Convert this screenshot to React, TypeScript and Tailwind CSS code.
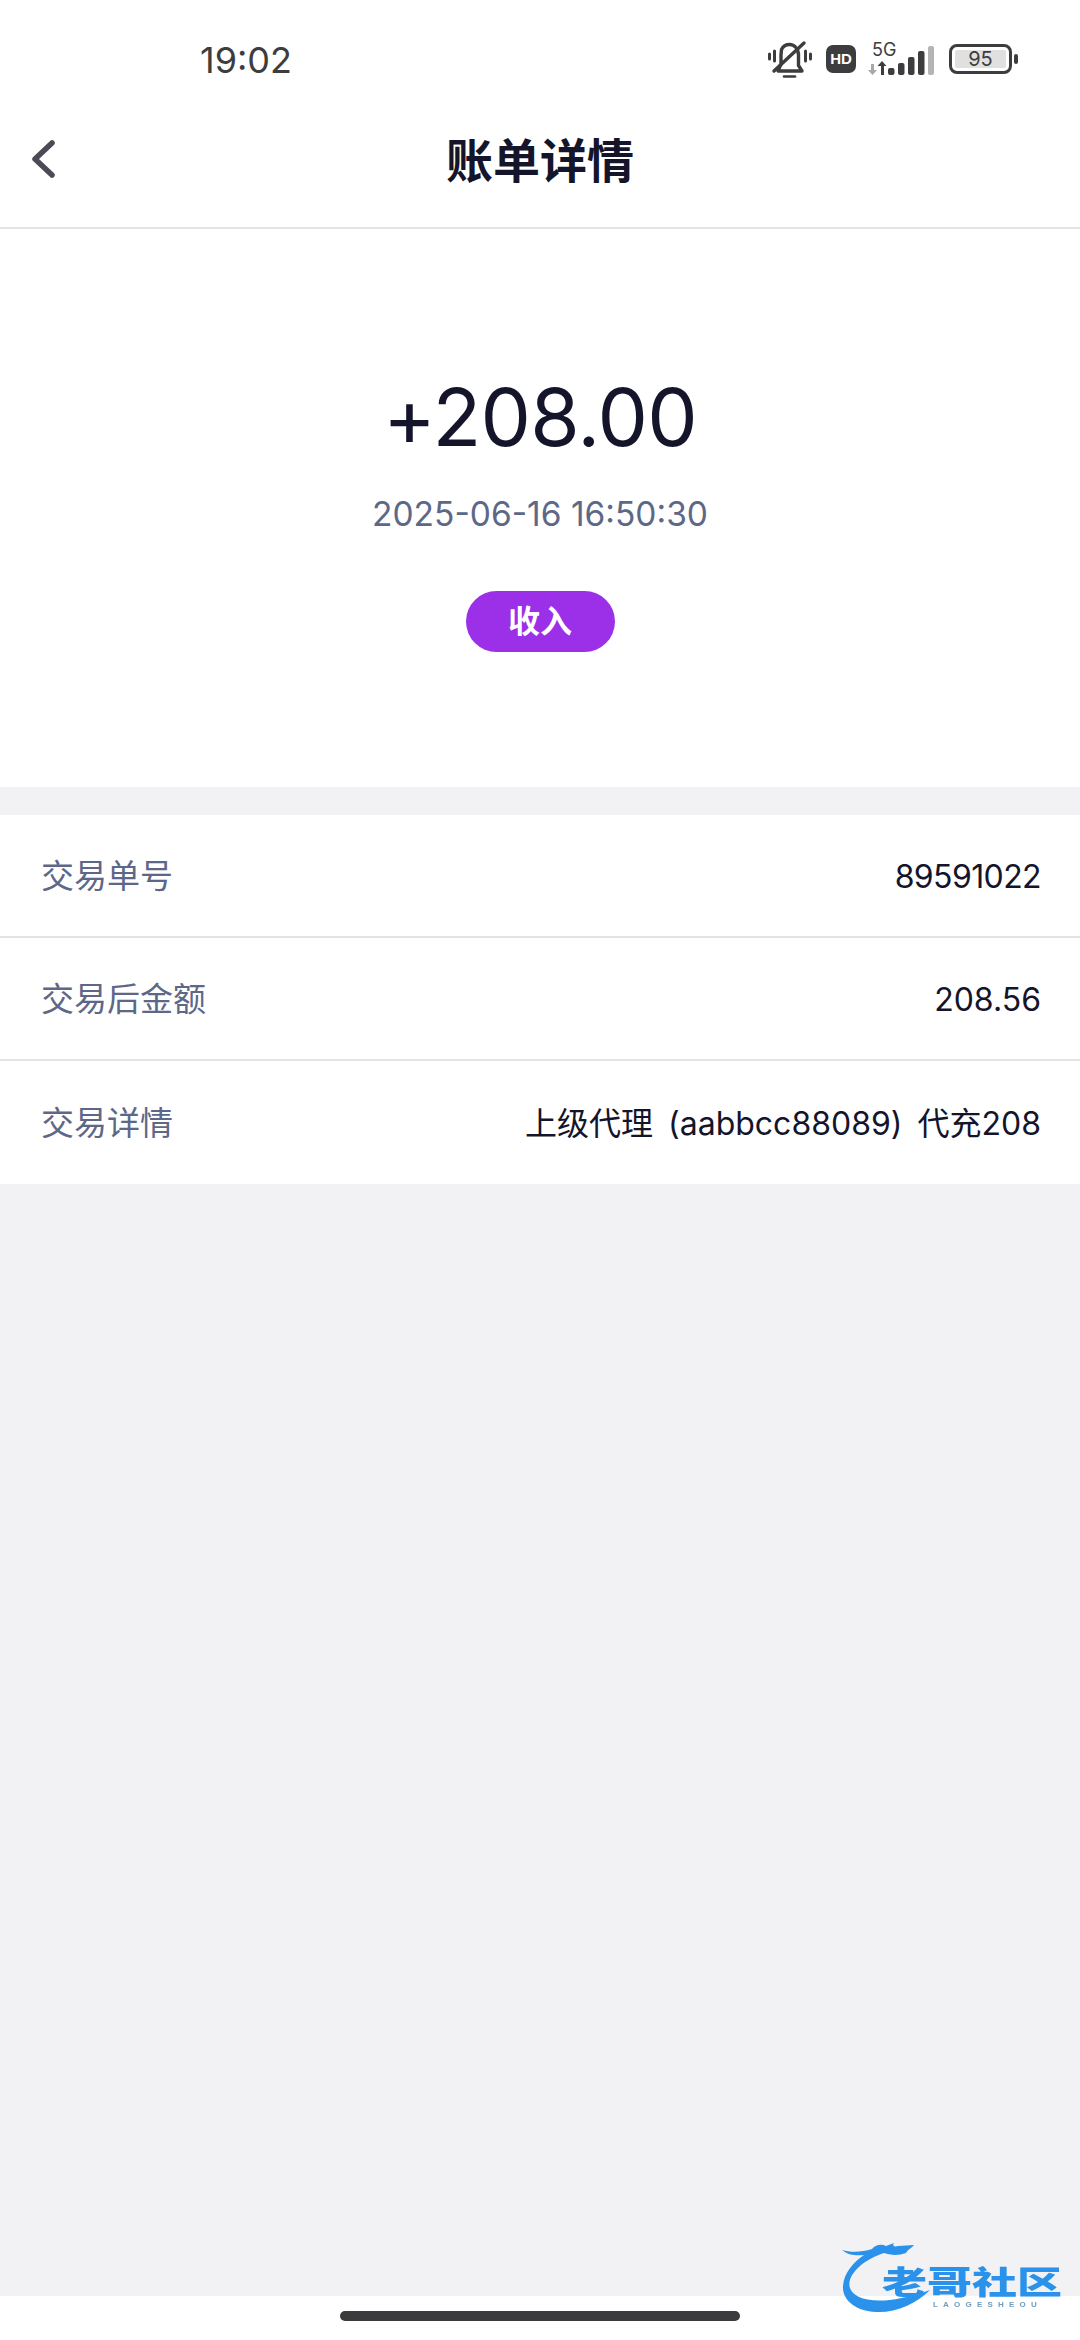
import React from "react";

const CJK = '[font-family:Inter,"Noto_Sans_CJK_SC",sans-serif]';

function MuteBell() {
  return (
    <svg width="44" height="38" viewBox="0 0 44 38" fill="none" stroke="#3d3d3f" strokeWidth="3.4" strokeLinecap="round" strokeLinejoin="round">
      <path d="M10 31h24l-3.500-5.500V15c0-6-4-10.500-9-10.500-3.500 0-6.500 2-8 5L13 15v9z" />
      <path d="M6 31L36 3" />
      <path d="M16 36.500h11" strokeWidth="2.600" />
      <path d="M1.500 14v5M6.500 11v10M37.500 11v10M42.500 14v5" strokeWidth="3" />
    </svg>
  );
}

function SignalBars() {
  return (
    <svg width="66" height="31" viewBox="0 0 66 31">
      <path d="M3 20h3v6h3l-4.500 5L0 26h3z" fill="#a8a8aa" />
      <path d="M14 17l4.500 5H16v9h-3v-9h-3.500z" fill="#3d3d3f" />
      <rect x="20" y="24" width="6.500" height="7" rx="2" fill="#3d3d3f" />
      <rect x="30" y="19" width="6.500" height="12" rx="2" fill="#3d3d3f" />
      <rect x="40" y="13" width="6.500" height="18" rx="2" fill="#3d3d3f" />
      <rect x="50" y="7" width="6.500" height="24" rx="2" fill="#3d3d3f" />
      <rect x="60" y="2" width="6" height="29" rx="2" fill="#b4b4b6" />
    </svg>
  );
}

function StatusBar() {
  return (
    <div className="h-[70px] pt-[20px] flex items-start justify-between">
      <div className={`ml-[200px] mt-[20px] text-[36px] leading-[40px] text-[#3d3d3f] ${CJK}`}>19:02</div>
      <div className="flex items-center mt-[19px] mr-[62px] h-[40px]">
        <MuteBell />
        <div className="ml-[14px] w-[30px] h-[28px] rounded-[7px] bg-[#3d3d3f] text-white text-[15px] font-bold flex items-center justify-center [font-family:'Liberation_Sans',sans-serif]">HD</div>
        <div className="ml-[12px] relative w-[66px] h-[31px]">
          <span className="absolute left-[4px] top-[-3px] text-[18px] leading-[18px] text-[#3d3d3f] [font-family:Inter,sans-serif]">5G</span>
          <div className="absolute left-0 top-0">
            <SignalBars />
          </div>
        </div>
        <div className="ml-[15px] w-[63px] h-[30px] rounded-[8px] border-[3px] border-[#3d3d3f] p-[3px] flex">
          <div className="flex-1 bg-[#e0e0e0] rounded-[2px] flex items-center justify-center text-[20px] leading-[20px] text-[#3d3d3f] [font-family:Inter,sans-serif]">95</div>
        </div>
        <div className="ml-[2px] w-[4px] h-[10px] rounded-[2px] bg-[#3d3d3f]" />
      </div>
    </div>
  );
}

function Header() {
  return (
    <div className="h-[159px] border-b-[2px] border-[#e3e3e5] relative flex items-center justify-center pt-[24px]">
      <svg className="absolute left-[28px] top-[68px]" width="28" height="42" viewBox="0 0 28 42" fill="none" stroke="#4b4b55" strokeWidth="5.500" strokeLinecap="round" strokeLinejoin="round">
        <path d="M24 5L7 21l17 16" />
      </svg>
      <span className={`text-[47px] leading-[54px] font-bold text-[#14152b] ${CJK}`}>账单详情</span>
    </div>
  );
}

function Row({ label, value, last, valueClass = "" }: { label: string; value: string; last?: boolean; valueClass?: string }) {
  return (
    <div className={`flex items-center justify-between pl-[41px] pr-[39px] pt-[2px] ${last ? "h-[123px]" : "h-[123px] border-b-[2px] border-[#e3e3e5]"}`}>
      <span className={`text-[33px] text-[#5d6888] ${CJK}`}>{label}</span>
      <span className={`text-[32px] text-[#14152b] ${CJK} ${valueClass}`}>{value}</span>
    </div>
  );
}

function Watermark() {
  return (
    <div className="absolute left-[840px] top-[2240px] w-[232px] h-[74px] pointer-events-none blur-[0.6px]">
      <svg className="absolute left-0 top-0" width="95" height="74" viewBox="0 0 95 74" fill="none">
        <path d="M2 10c10 3 20 2 30-1 4-5 10-5 14-3l8-3c-2 3 0 4 4 3l16-1c-2 3-6 4-8 8-8 3-16 2-22 0C22 20 6 36 10 48c4 12 30 20 80 2-14 14-34 23-54 22C16 71 2 60 3 46 4 32 14 22 24 15 16 16 8 15 2 10z" fill="#2a92ea" />
      </svg>
      <span className={`absolute left-[42px] top-[20px] whitespace-nowrap text-[45px] leading-[44px] font-black scale-y-[0.72] text-[#2a92ea] ${CJK}`}>老哥社区</span>
      <span className="absolute left-[93px] top-[60px] whitespace-nowrap text-[8px] leading-[9px] font-bold tracking-[5.2px] text-[#6f9cc2] [font-family:'Liberation_Sans',sans-serif]">LAOGESHEOU</span>
    </div>
  );
}

export default function App() {
  return (
    <div className="w-[1080px] h-[2340px] relative overflow-hidden bg-white flex flex-col">
      <StatusBar />
      <Header />
      <div className="h-[558px] flex flex-col items-center">
        <div className={`mt-[143px] text-[80px] leading-[90px] tracking-[-0.7px] text-[#14152b] ${CJK}`}>+208.00</div>
        <div className={`mt-[31px] text-[33.500px] leading-[42px] text-[#5d6888] ${CJK}`}>2025-06-16 16:50:30</div>
        <div className={`mt-[56px] w-[149px] h-[61px] rounded-full bg-[#9b30e8] text-white text-[32px] font-bold flex items-center justify-center ${CJK}`}>收入</div>
      </div>
      <div className="flex-none h-[28px] bg-[#f2f2f4]" />
      <Row label="交易单号" value="89591022" valueClass="tracking-[-0.6px]" />
      <Row label="交易后金额" value="208.56" />
      <Row label="交易详情" value="上级代理 (aabbcc88089) 代充208" valueClass="[word-spacing:6px]" last />
      <div className="flex-1 bg-[#f2f2f4]" />
      <div className="flex-none h-[44px] bg-white flex justify-center pt-[15px]">
        <div className="w-[400px] h-[10px] rounded-full bg-[#3b3b3d]" />
      </div>
      <Watermark />
    </div>
  );
}
